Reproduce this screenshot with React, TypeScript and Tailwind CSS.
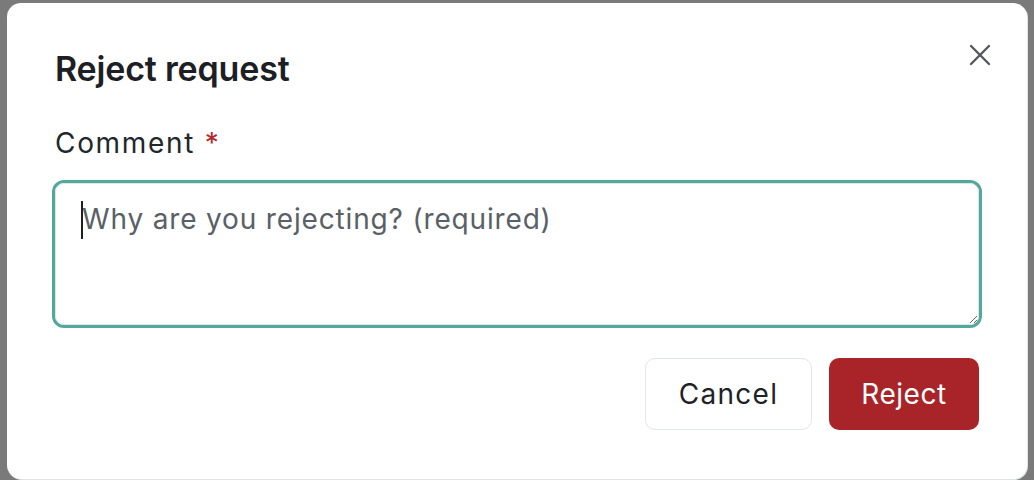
import { useState } from 'react';

function CloseIcon() {
  return (
    <svg width="22" height="22" viewBox="0 0 22 22" fill="none" stroke="#55595d" strokeWidth="2.4" strokeLinecap="round">
      <path d="M2 2L20 20" />
      <path d="M20 2L2 20" />
    </svg>
  );
}

export default function App() {
  const [comment, setComment] = useState('');

  return (
    <div className="h-[480px] w-full overflow-hidden bg-[#7a7a7a] pl-[7px] pt-[3px] font-['Inter',sans-serif]">
      <div className="relative h-[476px] w-[1020px] rounded-[14px] bg-white px-[48px] pt-[46px] shadow-[1px_1px_0_#e1e4e8]">
        <button className="absolute right-[36px] top-[41px] flex items-center justify-center" aria-label="Close">
          <CloseIcon />
        </button>

        <h2 className="text-[34px] font-semibold leading-[40px] tracking-[-0.005em] text-[#1c2024]">Reject request</h2>

        <label className="mt-[36px] block text-[28px] leading-[36px] tracking-[0.06em] text-[#22272b]">
          Comment <span className="text-[#b5282a]">*</span>
        </label>

        <div className="relative mt-[22px]">
          <textarea
            value={comment}
            onChange={e => setComment(e.target.value)}
            placeholder="Why are you rejecting? (required)"
            className="block h-[142px] w-full rounded-[9px] border border-[#e2e5e8] px-[26px] pt-[16px] text-[28px] leading-[38px] tracking-[0.03em] text-[#1c2024] shadow-[0_0_0_3px_#52a89b] outline-none placeholder:text-[#596066]"
          />
          {comment === '' && (
            <span className="pointer-events-none absolute left-[26px] top-[18px] h-[38px] w-[2px] bg-[#1c2024]" />
          )}
        </div>

        <div className="mt-[33px] flex justify-end gap-[17px]">
          <button className="h-[72px] w-[167px] rounded-[10px] border border-[#e2e5e9] bg-white text-[28px] tracking-[0.045em] text-[#1f2326]">
            Cancel
          </button>
          <button className="h-[72px] w-[150px] rounded-[10px] bg-[#a82428] text-[28px] tracking-[0.02em] text-white">
            Reject
          </button>
        </div>
      </div>
    </div>
  );
}
